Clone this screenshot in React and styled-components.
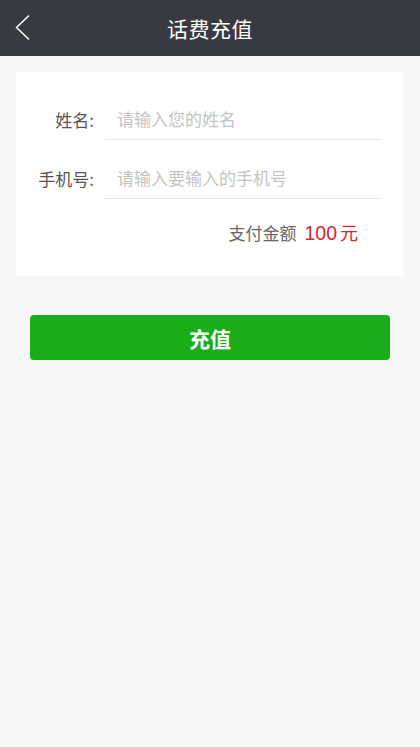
import React from 'react';
import styled, { createGlobalStyle } from 'styled-components';

const GlobalStyle = createGlobalStyle`
  body {
    margin: 0;
    background: #f6f6f6;
    font-family: "Noto Sans CJK SC", "Liberation Sans", sans-serif;
  }
`;

export default function App() {
  return (
    <Page>
      <GlobalStyle />
      <Header>
        <BackButton>
          <svg width="16" height="28" viewBox="0 0 16 28">
            <polyline
              points="14,1.5 1.5,13.5 14,25.5"
              fill="none"
              stroke="#fff"
              strokeWidth="1.5"
            />
          </svg>
        </BackButton>
        <Title>话费充值</Title>
      </Header>
      <Card>
        <Row>
          <Label>姓名:</Label>
          <Input placeholder="请输入您的姓名" />
        </Row>
        <Row>
          <Label>手机号:</Label>
          <Input placeholder="请输入要输入的手机号" />
        </Row>
        <PayLine>
          <span>支付金额</span>
          <Amount>
            <Digits>100</Digits>元
          </Amount>
        </PayLine>
      </Card>
      <SubmitButton>充值</SubmitButton>
    </Page>
  );
}

const Page = styled.div`
  min-height: 747px;
  background: #f6f6f6;
`;

const Header = styled.div`
  position: relative;
  height: 56px;
  background: #393a3f;
  display: flex;
  align-items: center;
  justify-content: center;
`;

const BackButton = styled.div`
  position: absolute;
  left: 15px;
  top: 14px;
  width: 16px;
  height: 28px;
`;

const Title = styled.span`
  color: #fff;
  font-size: 21px;
  letter-spacing: 0.5px;
`;

const Card = styled.div`
  margin: 16px 17px 0 16px;
  background: #fff;
  padding: 30px 22px 32px 0;
  display: flex;
  flex-direction: column;
`;

const Row = styled.div`
  display: flex;
  align-items: stretch;
  height: 59px;
  &:first-child {
    height: 38px;
  }
`;

const Label = styled.div`
  width: 78px;
  font-size: 17px;
  color: #555;
  display: flex;
  align-items: center;
  justify-content: flex-end;
  padding: 21px 0 4px;
  box-sizing: border-box;
  ${Row}:first-child & {
    padding-top: 0;
  }
`;

const Input = styled.input`
  flex: 1;
  margin-left: 11px;
  border: none;
  border-bottom: 1px solid #e5e5e5;
  outline: none;
  padding: 21px 0 4px 12px;
  font-family: inherit;
  font-size: 17px;
  color: #333;
  background: transparent;
  ${Row}:first-child & {
    padding-top: 0;
  }
  &::placeholder {
    color: #c4c4c4;
  }
`;

const PayLine = styled.div`
  display: flex;
  justify-content: flex-end;
  align-items: center;
  gap: 8px;
  margin-top: 21px;
  padding-right: 23px;
  font-size: 17px;
  color: #666;
  height: 24px;
`;

const Amount = styled.span`
  color: #d7262f;
  font-size: 18px;
`;

const Digits = styled.span`
  font-family: "Liberation Sans", sans-serif;
  font-size: 19.5px;
  margin-right: 3px;
`;

const SubmitButton = styled.button`
  display: block;
  margin: 39px 30px 0 30px;
  width: calc(100% - 60px);
  height: 45px;
  border: none;
  border-radius: 4px;
  background: #1aad19;
  color: #fff;
  font-family: inherit;
  font-size: 21px;
  font-weight: bold;
`;
